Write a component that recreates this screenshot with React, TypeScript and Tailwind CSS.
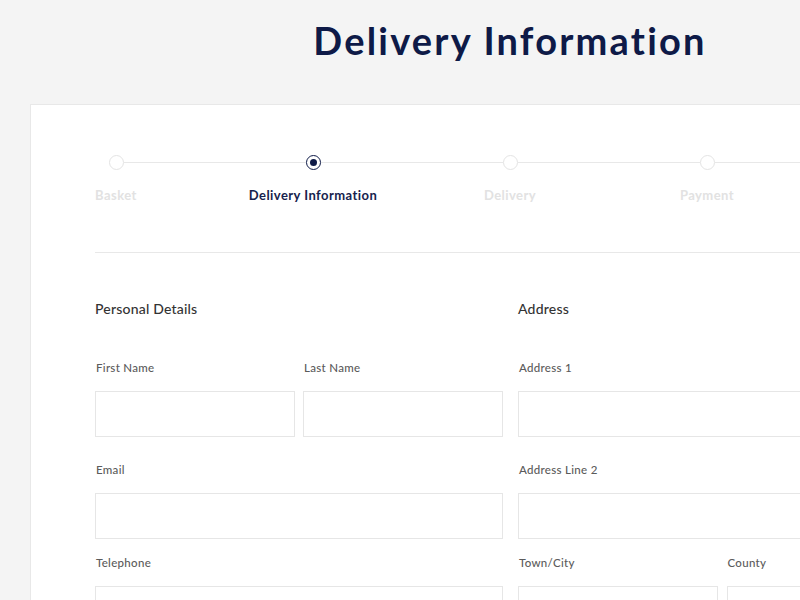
const steps = ["Basket", "Delivery Information", "Delivery", "Payment", "Confirmation"];
const active = 1;

function Field({ label, className = "" }: { label: string; className?: string }) {
  return (
    <div className={className}>
      <label className="block text-[11.5px] leading-4 font-medium tracking-[0.3px] text-[#5b5b5b] pl-px">{label}</label>
      <input className="mt-[15px] block w-full h-[46px] border border-[#e6e6e6] bg-white outline-none" />
    </div>
  );
}

export default function App() {
  return (
    <div className="min-h-screen bg-[#f4f4f4] overflow-hidden" style={{ fontFamily: "Lato, 'Open Sans', sans-serif" }}>
      <div className="w-[1020px] px-[30px]">
        <h1 className="pt-[15px] h-[104px] text-center text-[38px] leading-[50px] font-bold tracking-[2.2px] text-[#0e1a47]">
          Delivery Information
        </h1>

        <div className="bg-white border border-[#e8e8e8] w-[960px] min-h-[600px]">
          {/* stepper */}
          <div className="flex justify-center -mx-[14px] pt-[50px]">
            {steps.map((s, i) => (
              <div key={s} className="w-[197px] flex flex-col items-center">
                <div className="flex items-center w-full">
                  <div className={"flex-1 h-px " + (i === 0 ? "bg-transparent" : "bg-[#e8e8e8]")} />
                  {i === active ? (
                    <div className="w-[15px] h-[15px] rounded-full border-[1.5px] border-[#0e1a47] flex items-center justify-center">
                      <div className="w-[7px] h-[7px] rounded-full bg-[#0e1a47]" />
                    </div>
                  ) : (
                    <div className="w-[15px] h-[15px] rounded-full border border-[#e4e4e4] bg-white" />
                  )}
                  <div className={"flex-1 h-px " + (i === steps.length - 1 ? "bg-transparent" : "bg-[#e8e8e8]")} />
                </div>
                <div
                  className={
                    "mt-[17px] text-[13px] leading-4 font-bold tracking-[0.45px] whitespace-nowrap " +
                    (i === active ? "text-[#16224d]" : "text-[#e2e2e2]")
                  }
                >
                  {s}
                </div>
              </div>
            ))}
          </div>

          <div className="mx-[64px] mt-[49px] border-t border-[#e8e8e8]" />

          <div className="px-[64px] pt-[46px] grid grid-cols-[408px_408px] gap-x-[15px]">
            <div>
              <h2 className="text-[14px] leading-5 font-medium tracking-[0.2px] text-[#333]">Personal Details</h2>
              <div className="mt-[41px] flex gap-2">
                <Field label="First Name" className="w-[200px]" />
                <Field label="Last Name" className="w-[200px]" />
              </div>
              <Field label="Email" className="mt-[25px]" />
              <Field label="Telephone" className="mt-[16px]" />
            </div>
            <div>
              <h2 className="text-[14px] leading-5 font-medium tracking-[0.2px] text-[#333]">Address</h2>
              <Field label="Address 1" className="mt-[41px]" />
              <Field label="Address Line 2" className="mt-[25px]" />
              <div className="mt-[16px] flex gap-[9px]">
                <Field label="Town/City" className="w-[200px]" />
                <Field label="County" className="w-[200px]" />
              </div>
            </div>
          </div>
        </div>
      </div>
    </div>
  );
}
